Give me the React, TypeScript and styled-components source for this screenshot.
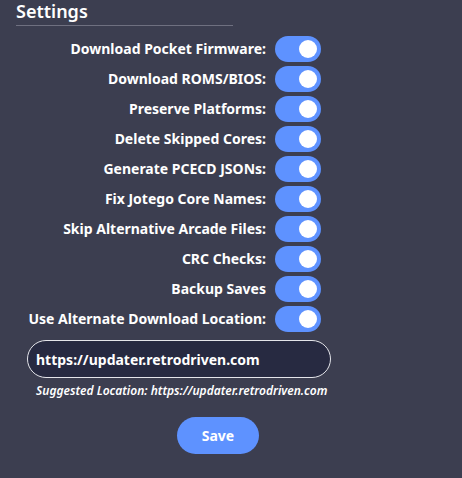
import React, { useState } from "react";
import styled, { createGlobalStyle } from "styled-components";

const GlobalStyle = createGlobalStyle`
  *, *::before, *::after { box-sizing: border-box; }
  body {
    margin: 0;
    min-height: 100vh;
    background: #3c3e50;
    color: #fff;
    font-family: "Noto Sans", "Open Sans", sans-serif;
  }
`;

const Page = styled.main`
  padding: 0 16px 24px;
`;

const Title = styled.h1`
  width: 100%;
  max-width: 217px;
  margin: 0 0 10px;
  padding-bottom: 3px;
  border-bottom: 1px solid #6f7080;
  font-size: 18px;
  line-height: 22px;
  font-weight: 600;
`;

const Form = styled.form`
  display: flex;
  flex-direction: column;
  max-width: 315px;
  padding-left: 11px;
`;

const Options = styled.div`
  display: flex;
  flex-direction: column;
  align-items: flex-end;
  gap: 4px;
  padding-right: 10px;
`;

const OptionRow = styled.label`
  display: flex;
  align-items: center;
  gap: 9px;
  height: 26px;
  font-size: 14px;
  line-height: 20px;
  font-weight: 700;
  white-space: nowrap;
`;

const Switch = styled.input`
  appearance: none;
  display: flex;
  align-items: center;
  width: 46px;
  height: 26px;
  margin: 0;
  padding: 0 4px;
  border-radius: 13px;
  background: #8a8c99;
  cursor: pointer;

  &::before {
    content: "";
    width: 18px;
    height: 18px;
    border-radius: 50%;
    background: #fff;
  }

  &:checked {
    justify-content: flex-end;
    background: #5e92ff;
  }
`;

const LocationInput = styled.input`
  height: 38px;
  margin: 8px 0 0;
  padding: 0 8px;
  border: 1px solid #e4e5ea;
  border-radius: 19px;
  background: #272a41;
  color: #fff;
  font: 700 14px/20px "Noto Sans", "Open Sans", sans-serif;
`;

const Hint = styled.p`
  margin: 4px 0 0 9px;
  font-size: 12px;
  line-height: 18px;
  font-style: italic;
  font-weight: 600;
  white-space: nowrap;
`;

const SaveButton = styled.button`
  align-self: flex-end;
  width: 82px;
  height: 37px;
  margin: 17px 72px 0 0;
  border: 0;
  border-radius: 19px;
  background: #5e92ff;
  color: #fff;
  cursor: pointer;
  font: 700 14px/20px "Noto Sans", "Open Sans", sans-serif;
`;

const options = [
  "Download Pocket Firmware:",
  "Download ROMS/BIOS:",
  "Preserve Platforms:",
  "Delete Skipped Cores:",
  "Generate PCECD JSONs:",
  "Fix Jotego Core Names:",
  "Skip Alternative Arcade Files:",
  "CRC Checks:",
  "Backup Saves",
  "Use Alternate Download Location:",
];

export default function App() {
  const [location, setLocation] = useState("https://updater.retrodriven.com");
  return (
    <Page>
      <GlobalStyle />
      <Title>Settings</Title>
      <Form onSubmit={(e) => e.preventDefault()}>
        <Options>
          {options.map((text) => (
            <OptionRow key={text}>
              {text}
              <Switch type="checkbox" role="switch" defaultChecked />
            </OptionRow>
          ))}
        </Options>
        <LocationInput
          aria-label="Alternate download location"
          value={location}
          onChange={(e) => setLocation(e.target.value)}
        />
        <Hint>Suggested Location: https://updater.retrodriven.com</Hint>
        <SaveButton type="submit">Save</SaveButton>
      </Form>
    </Page>
  );
}
